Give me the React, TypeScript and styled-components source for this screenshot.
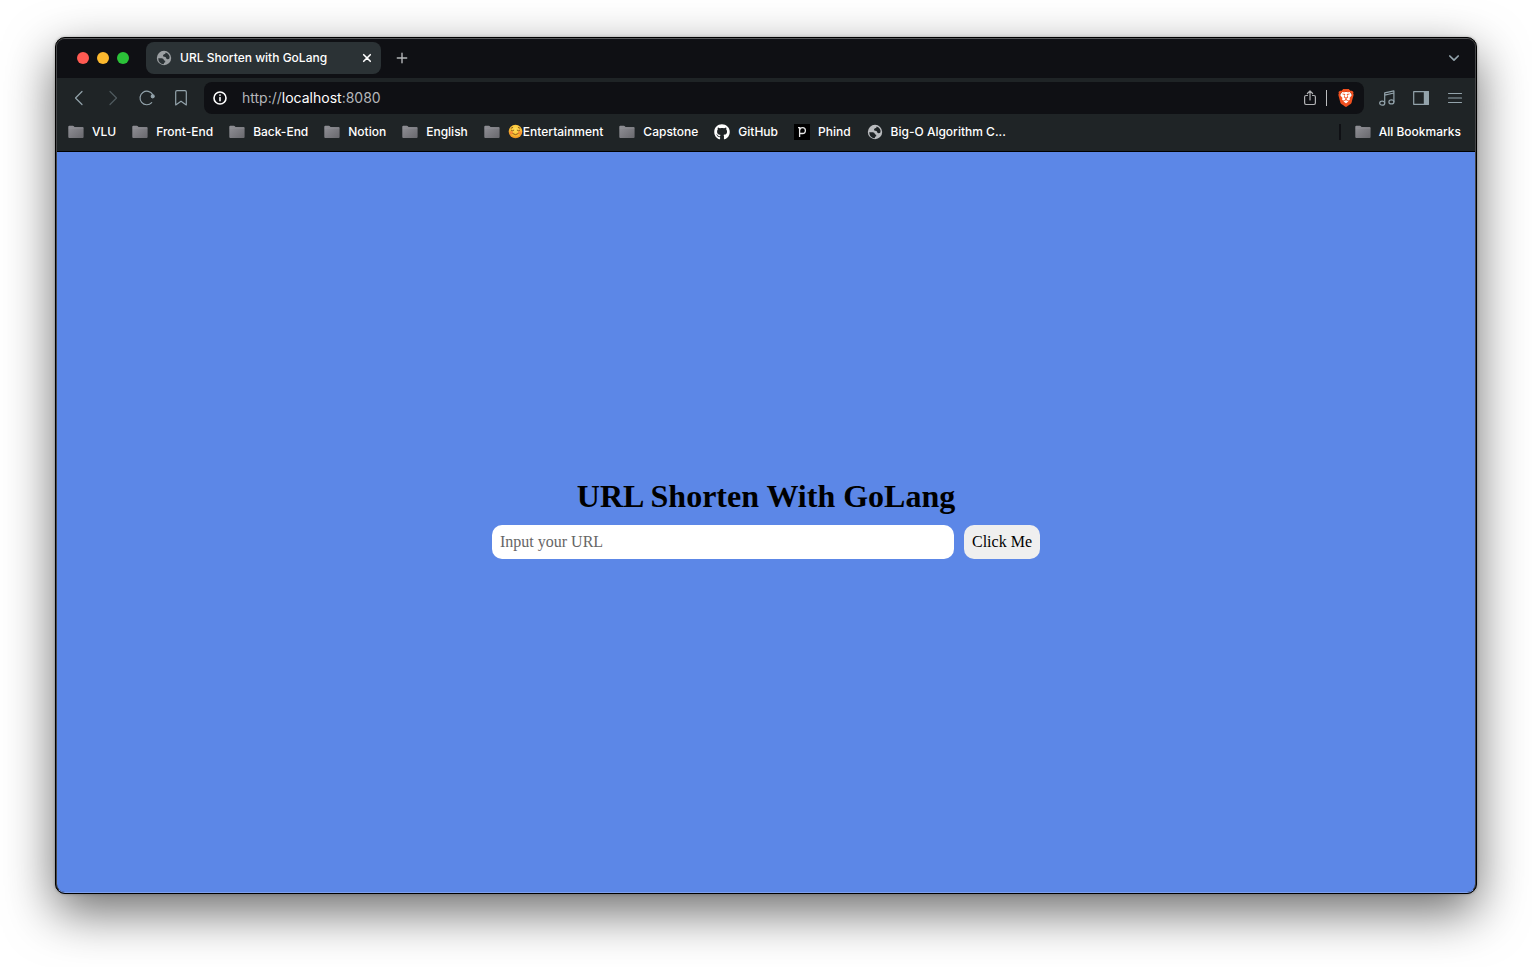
import React from "react";
import styled, { createGlobalStyle } from "styled-components";
import { FaGithub } from "react-icons/fa";
import { SiBrave } from "react-icons/si";

const GlobalStyle = createGlobalStyle`
  *, *::before, *::after { box-sizing: border-box; }
  body { margin: 0; background: #fff; }
  svg { display: block; flex: none; }
`;

const Desktop = styled.div`
  min-height: 100vh;
  display: flex;
  padding: 37px 55px 73px;
  overflow: hidden;
`;

const BrowserWindow = styled.div`
  flex: 1;
  min-width: 0;
  display: flex;
  border: 1px solid #000;
  border-radius: 10px;
  background: #000;
  box-shadow: 0 18px 50px rgba(0, 0, 0, 0.58), 0 0 3px rgba(0, 0, 0, 0.3);
`;

const Frame = styled.div`
  flex: 1;
  min-width: 0;
  display: flex;
  flex-direction: column;
  overflow: hidden;
  border: 1px solid;
  border-color: #58595b #454648 #7ea0ee;
  border-radius: 9px;
  background: #1f2426;
  color: #fff;
  font: 500 12px/16px Inter, "Liberation Sans", sans-serif;
`;

const TabStrip = styled.header`
  display: flex;
  align-items: center;
  height: 39px;
  padding: 0 13px 2px 20px;
  background: #0f1014;
`;

const Lights = styled.div`
  display: flex;
  gap: 8px;
  margin-right: 17px;
`;

const Light = styled.button<{ $color: string }>`
  width: 12px;
  height: 12px;
  padding: 0;
  border: 0;
  border-radius: 50%;
  background: ${(p) => p.$color};
`;

const Tab = styled.div`
  display: flex;
  align-items: center;
  gap: 8px;
  width: 235px;
  height: 32px;
  padding: 0 6px 0 10px;
  border-radius: 8px;
  background: #2b3235;
`;

const TabTitle = styled.span`
  flex: 1;
  white-space: nowrap;
`;

const IconButton = styled.button<{ $size?: number; $color?: string }>`
  display: flex;
  align-items: center;
  justify-content: center;
  width: ${(p) => p.$size ?? 34}px;
  height: ${(p) => p.$size ?? 34}px;
  padding: 0;
  border: 0;
  background: none;
  color: ${(p) => p.$color ?? "#93a3ab"};
`;

const NewTab = styled(IconButton)`
  margin: 0 auto 0 11px;
`;

const Toolbar = styled.nav`
  display: flex;
  align-items: center;
  height: 40px;
  padding: 0 3px 0 5px;
`;

const AddressBar = styled.div`
  flex: 1;
  display: flex;
  align-items: center;
  height: 32px;
  margin: 0 6px;
  padding: 0 6px 0 4px;
  border-radius: 8px;
  background: #0f1014;
`;

const Address = styled.a`
  flex: 1;
  margin-left: 10px;
  color: #b4b6b9;
  font-size: 14px;
  font-weight: 400;
  line-height: 20px;
  text-decoration: none;
`;

const Host = styled.span`
  color: #fff;
`;

const Divider = styled.span<{ $color: string; $width: number }>`
  width: ${(p) => p.$width}px;
  height: 16px;
  background: ${(p) => p.$color};
`;

const AddressDivider = styled(Divider)`
  margin-right: 7px;
`;

const Bookmarks = styled.nav`
  display: flex;
  align-items: center;
  gap: 16px;
  height: 34px;
  padding: 0 14px 6px 11px;
  border-bottom: 1px solid #000;
  white-space: nowrap;
`;

const Bookmark = styled.a`
  display: flex;
  align-items: center;
  gap: 8px;
  color: inherit;
  text-decoration: none;
`;

const Label = styled.span`
  display: flex;
  align-items: center;
`;

const AllBookmarks = styled.div`
  display: flex;
  align-items: center;
  gap: 14px;
  margin-left: auto;
`;

const Page = styled.main`
  flex: 1;
  display: flex;
  flex-direction: column;
  align-items: center;
  justify-content: center;
  gap: 11px;
  padding-bottom: 8px;
  background: #5c87e7;
  color: #000;
  font-family: "Liberation Serif", "Times New Roman", serif;
`;

const Title = styled.h1`
  margin: 0;
  font-size: 32px;
  font-weight: 700;
  line-height: 36px;
`;

const Form = styled.form`
  display: flex;
  gap: 10px;
`;

const UrlInput = styled.input`
  width: 462px;
  height: 34px;
  padding: 0 8px;
  border: 0;
  border-radius: 10px;
  background: #fff;
  font: inherit;
  font-size: 16px;
  &::placeholder { color: #666; }
`;

const Submit = styled.button`
  width: 76px;
  height: 34px;
  padding: 0;
  border: 0;
  border-radius: 10px;
  background: #efefef;
  color: #000;
  font: inherit;
  font-size: 16px;
`;

const Stroke = ({ size = 16, width = 1.2, children }: { size?: number; width?: number; children: React.ReactNode }) => (
  <svg width={size} height={size} viewBox={`0 0 ${size} ${size}`} fill="none" stroke="currentColor" strokeWidth={width} strokeLinecap="round" strokeLinejoin="round">
    {children}
  </svg>
);

const Globe = ({ color, land }: { color: string; land: string }) => (
  <svg width="16" height="16" viewBox="0 0 16 16">
    <circle cx="8" cy="8" r="7.2" fill={color} />
    <path
      d="M2.200 8.200h3.600q1.700.2 2 1.500.2 1 1.400 1.100v1.500q-1.400.1-1.500 2Q2.500 13.800 2.200 8.200zM9.600 2.400Q9.700 4 8.200 4.200q-1.200.2-1.200 1.500 0 1.100 1.300 1.100 1.500 0 1.800 1.200.3 1.300 1.700 1.200 1.100-.1 1.700-.9.800-3.900-3.900-5.900z"
      fill={land}
    />
  </svg>
);

const Folder = () => (
  <svg width="16" height="16" viewBox="0 0 16 16">
    <defs>
      <linearGradient id="folder" x1="0" y1="0" x2="1" y2="1">
        <stop offset="0" stopColor="#919197" />
        <stop offset="1" stopColor="#68686d" />
      </linearGradient>
    </defs>
    <path d="M0.3 2.800q0-1 1-1h3.600q.6 0 1 .5l.6.7h8.100q1 0 1 1v9.100q0 1-1 1H1.300q-1 0-1-1z" fill="url(#folder)" />
    <path d="M.6 4.200h14.800" stroke="#a0a0a5" strokeWidth=".6" opacity=".5" />
  </svg>
);

const Smile = () => (
  <svg width="15" height="15" viewBox="0 0 15 15" role="img" aria-label="Smiling face" fill="none" strokeLinecap="round">
    <defs>
      <radialGradient id="face" cx=".5" cy=".35" r=".65">
        <stop offset="0" stopColor="#ffe25a" />
        <stop offset=".65" stopColor="#fbbd32" />
        <stop offset="1" stopColor="#e98a20" />
      </radialGradient>
    </defs>
    <circle cx="7.5" cy="7.5" r="6.8" fill="url(#face)" />
    <circle cx="3.3" cy="8.7" r="1.8" fill="#f56b35" opacity=".6" />
    <circle cx="11.7" cy="8.7" r="1.8" fill="#f56b35" opacity=".6" />
    <path d="M3.2 6.3q1.3 1.1 2.6 0M9.2 6.3q1.3 1.1 2.6 0M4.9 9.700q2.600 2.200 5.200 0M3.2 4.2l1.5-.7M11.8 4.2l-1.5-.7" stroke="#70400f" strokeWidth=".8" />
  </svg>
);

const Phind = () => (
  <svg width="16" height="16" viewBox="0 0 16 16" fill="none">
    <path d="M0 0h16v16H0z" fill="#000" />
    <path d="M4 3.700h1.600v9.200M5.600 6.400Q6 3.700 8.600 3.700q2.800 0 2.800 2.900T8.600 9.500H5.600" stroke="#e8e8e8" strokeWidth="1.3" />
  </svg>
);

const Brave = () => (
  <svg width="18" height="18" viewBox="0 0 18 18">
    <path d="M5 3h8l2 3-2.5 7L9 16l-3.500-3L3 6z" fill="#fff" />
    <SiBrave size={18} color="#f1501f" />
  </svg>
);

const bookmarks: { label: string; icon?: React.ReactNode; emoji?: boolean }[] = [
  { label: "VLU" },
  { label: "Front-End" },
  { label: "Back-End" },
  { label: "Notion" },
  { label: "English" },
  { label: "Entertainment", emoji: true },
  { label: "Capstone" },
  { label: "GitHub", icon: <FaGithub size={16} /> },
  { label: "Phind", icon: <Phind /> },
  { label: "Big-O Algorithm C...", icon: <Globe color="#b9bbbe" land="#1f2426" /> },
];

export default function App() {
  return (
    <>
      <GlobalStyle />
      <Desktop>
        <BrowserWindow>
          <Frame>
            <TabStrip>
              <Lights>
                <Light $color="#ff5a52" aria-label="Close window" />
                <Light $color="#fdb92e" aria-label="Minimize window" />
                <Light $color="#2bc238" aria-label="Zoom window" />
              </Lights>
              <Tab>
                <Globe color="#9b9fa2" land="#2b3235" />
                <TabTitle>URL Shorten with GoLang</TabTitle>
                <IconButton $size={16} $color="#fff" aria-label="Close tab">
                  <Stroke width={1.6}><path d="M4.700 4.700l6.600 6.600M11.300 4.700l-6.600 6.600" /></Stroke>
                </IconButton>
              </Tab>
              <NewTab $size={20} $color="#b4b6b8" aria-label="New tab">
                <Stroke width={1.4}><path d="M8 3.300v9.400M3.300 8h9.400" /></Stroke>
              </NewTab>
              <IconButton $size={16} aria-label="Search tabs">
                <Stroke width={1.7}><path d="M3.800 6L8 10.200 12.200 6" /></Stroke>
              </IconButton>
            </TabStrip>
            <Toolbar aria-label="Navigation">
              <IconButton aria-label="Back"><Stroke><path d="M11 1.500L4.500 8 11 14.500" /></Stroke></IconButton>
              <IconButton $color="#505a5f" aria-label="Forward"><Stroke><path d="M5 1.500L11.500 8 5 14.500" /></Stroke></IconButton>
              <IconButton aria-label="Reload">
                <Stroke>
                  <path d="M12.700 12.700A6.800 6.800 0 1 1 13.700 4.500" />
                  <circle cx="13.700" cy="6.300" r="1.500" fill="currentColor" />
                </Stroke>
              </IconButton>
              <IconButton aria-label="Bookmark this page"><Stroke><path d="M2.700 2q0-1.300 1.300-1.300h8q1.300 0 1.300 1.300v12.900L8 11.200l-5.300 3.700z" /></Stroke></IconButton>
              <AddressBar>
                <IconButton $size={24} $color="#fff" aria-label="Site information">
                  <Stroke width={1.6}><circle cx="8" cy="8" r="6" /><path d="M8 7.600v3.100M8 5.100v.1" /></Stroke>
                </IconButton>
                <Address href="http://localhost:8080">http://<Host>localhost</Host>:8080</Address>
                <IconButton $size={32} $color="#b0b1b3" aria-label="Share">
                  <Stroke><path d="M5.500 5.500H4Q2.600 5.500 2.600 7v6.100q0 1.400 1.400 1.400h8q1.400 0 1.400-1.400V7Q13.400 5.500 12 5.500h-1.500M8 10V1M5.400 3.500L8 .9l2.600 2.600" /></Stroke>
                </IconButton>
                <AddressDivider $color="#bcbdbf" $width={1} />
                <IconButton $size={24} aria-label="Brave Shields"><Brave /></IconButton>
              </AddressBar>
              <IconButton aria-label="Media">
                <Stroke><path d="M5.700 13V2.900L14.900.8v10.900M5.700 5.200L14.900 3" /><ellipse cx="3.200" cy="13.200" rx="2.500" ry="2" /><ellipse cx="12.400" cy="11.900" rx="2.500" ry="2" /></Stroke>
              </IconButton>
              <IconButton aria-label="Sidebar">
                <Stroke><path d="M.7 1.700h14.600v12.600H.7z" /><path d="M11.400 1.700h3.900v12.600h-3.900z" fill="currentColor" /></Stroke>
              </IconButton>
              <IconButton aria-label="Menu"><Stroke><path d="M1.500 3.500h13M1.500 8h13M1.500 12.500h13" /></Stroke></IconButton>
            </Toolbar>
            <Bookmarks aria-label="Bookmarks">
              {bookmarks.map((b) => (
                <Bookmark key={b.label} href="#">
                  {b.icon ?? <Folder />}
                  <Label>{b.emoji && <Smile />}{b.label}</Label>
                </Bookmark>
              ))}
              <AllBookmarks>
                <Divider $color="#0f1014" $width={2} />
                <Bookmark href="#"><Folder />All Bookmarks</Bookmark>
              </AllBookmarks>
            </Bookmarks>
            <Page>
              <Title>URL Shorten With GoLang</Title>
              <Form onSubmit={(e) => e.preventDefault()}>
                <UrlInput type="text" aria-label="Input your URL" placeholder="Input your URL" />
                <Submit type="submit">Click Me</Submit>
              </Form>
            </Page>
          </Frame>
        </BrowserWindow>
      </Desktop>
    </>
  );
}
